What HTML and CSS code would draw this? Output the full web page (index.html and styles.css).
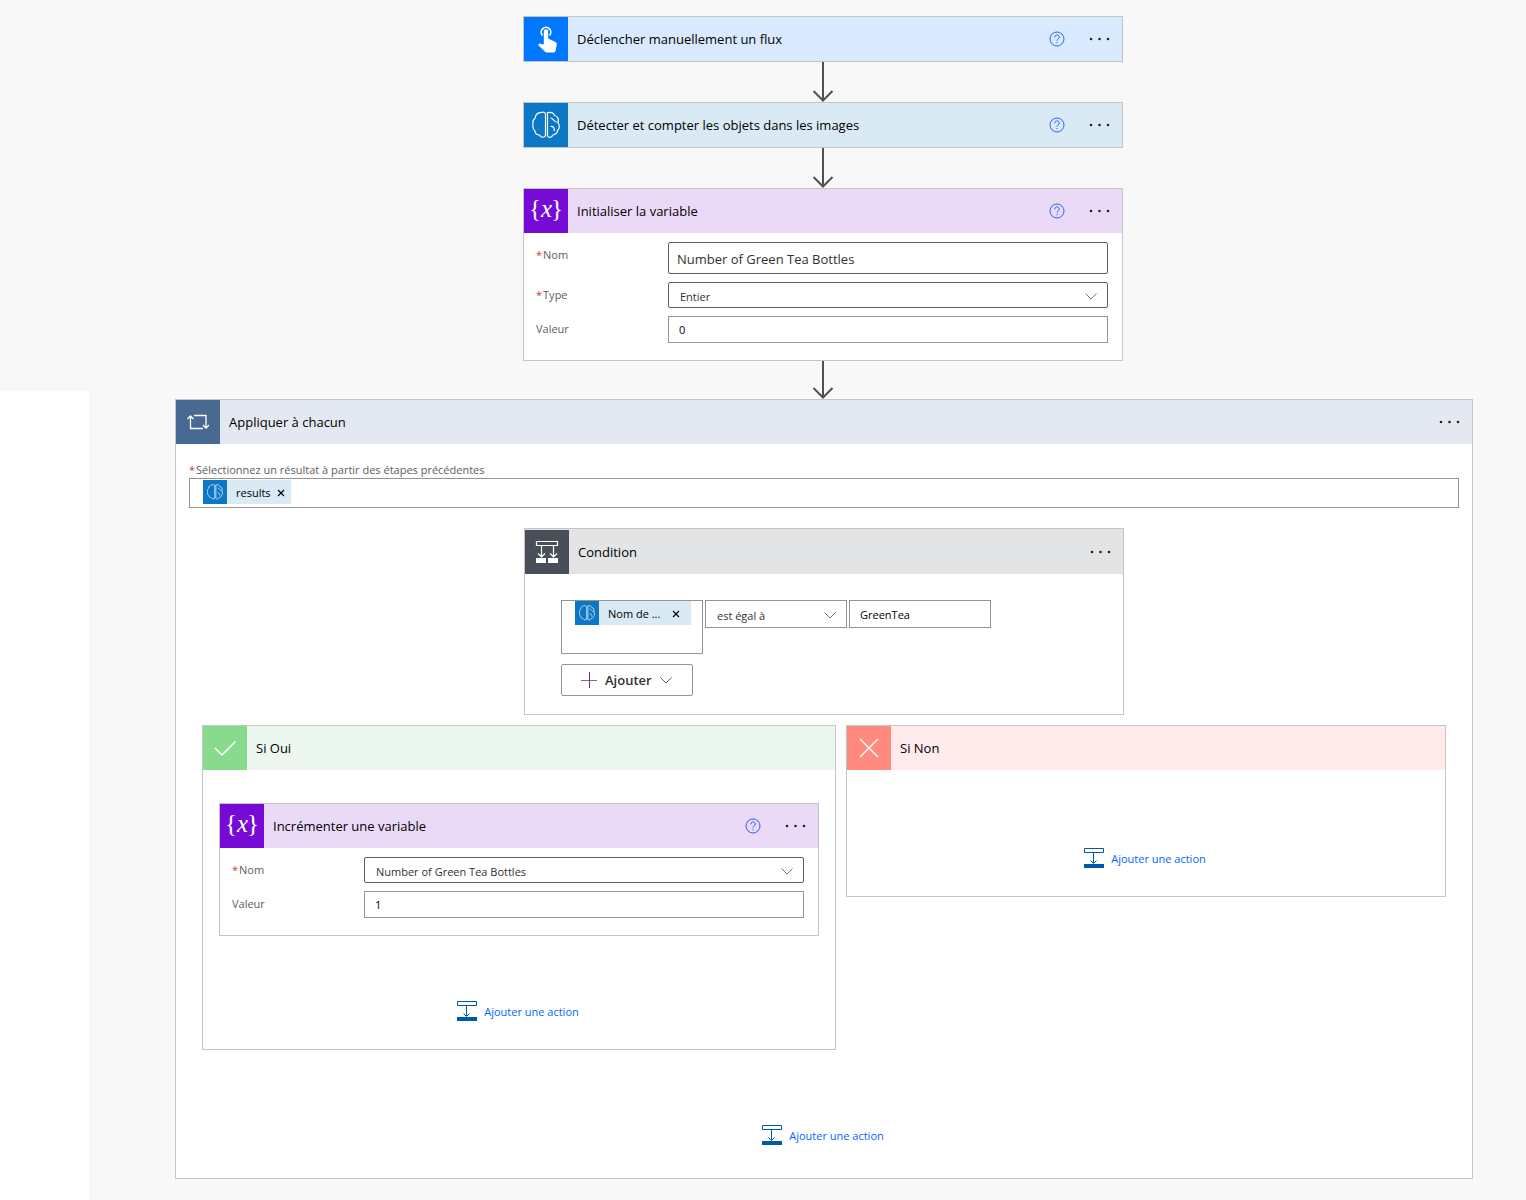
FILE: index.html
```html
<!DOCTYPE html>
<html lang="fr">
<head>
<meta charset="utf-8">
<meta name="viewport" content="width=device-width, initial-scale=1">
<title>Flux</title>
<link rel="stylesheet" href="styles.css">
</head>
<body>
<svg class="sprite" aria-hidden="true">
  <symbol id="brain" viewBox="0 0 28 28">
    <path d="M13.500 25V3C13.500.8 10 1 8 1.700C5 2 3.500 4 3.200 7C1 8.500.7 11 1 13C.5 16 1 18.500 3 20C3.200 22.500 5 24 7.500 24C9 27 13 27 13.500 24M15.500 24.500V1.500C18 1 22 1.500 22.500 4.500C26 5.500 27 8 26 11.500C28 14 27.500 18 25.500 19.500C25.500 22 23 23.500 21 24C19.500 27 16 27 15.500 24.500M18.500 7C21 6.500 22 11.500 26 11.500M18.500 15.500C21.500 15 23 17.500 22 20"/>
  </symbol>
  <symbol id="help" viewBox="0 0 16 16">
    <circle cx="8" cy="8" r="7"/>
    <path d="M5.800 6.200C5.800 3.200 10.300 3.200 10.300 6C10.300 7.800 8 7.900 8 9.700M8 11v1.200"/>
  </symbol>
  <symbol id="more" viewBox="0 0 22 4">
    <circle cx="2" cy="2" r="1.300"/><circle cx="10.500" cy="2" r="1.300"/><circle cx="19" cy="2" r="1.300"/>
  </symbol>
  <symbol id="chevron" viewBox="0 0 12 7">
    <path d="M.500.500L6 6L11.500.500"/>
  </symbol>
  <symbol id="cross" viewBox="0 0 8 8">
    <path d="M1 1l6 6M7 1L1 7"/>
  </symbol>
  <symbol id="arrow" viewBox="0 0 22 12">
    <path d="M1.500 1L11 10.500L20.500 1"/>
  </symbol>
  <symbol id="insert" viewBox="0 0 20 20">
    <path d="M.500.500h19v4H.500zM9.500 5v10M6.500 12.500l3 3l3-3" fill="none" stroke="#0058ad"/>
    <path d="M0 16h20v4H0z" fill="#0058ad"/>
  </symbol>
</svg>

<div class="page">
  <aside class="side" aria-label="Panneau"></aside>
  <main class="canvas">
    <div class="steps">
      <section class="card card--manual">
        <header class="card__head">
          <span class="card__icon"><svg width="44" height="44" viewBox="0 0 44 44"><path d="M18.500 18.500A4.800 4.800 0 1 1 25.500 18.500" fill="none" stroke="#fff" stroke-width="1.700"/><path d="M19.800 14.500a2.200 2.200 0 0 1 4.400 0V21.500L31.500 25Q33 25.800 32.800 27.500L31.500 34Q31.200 35.500 29.700 35.500H23Q21.800 35.500 20.800 34.500L14 28L15 27Q15.800 26.300 17 26.700L19.800 27.500z" fill="#fff"/></svg></span>
          <h2>Déclencher manuellement un flux</h2>
          <button class="icon-button help" aria-label="Aide"><svg width="16" height="16"><use href="#help"/></svg></button>
          <button class="icon-button" aria-label="Plus"><svg width="22" height="4"><use href="#more"/></svg></button>
        </header>
      </section>
      <div class="link-arrow"><svg width="22" height="12"><use href="#arrow"/></svg></div>
      <section class="card card--ai">
        <header class="card__head">
          <span class="card__icon"><svg class="brain" width="28" height="28"><use href="#brain"/></svg></span>
          <h2>Détecter et compter les objets dans les images</h2>
          <button class="icon-button help" aria-label="Aide"><svg width="16" height="16"><use href="#help"/></svg></button>
          <button class="icon-button" aria-label="Plus"><svg width="22" height="4"><use href="#more"/></svg></button>
        </header>
      </section>
      <div class="link-arrow"><svg width="22" height="12"><use href="#arrow"/></svg></div>
      <section class="card card--variable">
        <header class="card__head">
          <span class="card__icon"><svg class="variable" width="44" height="44" viewBox="0 0 44 44"><text x="5" y="28">{</text><text x="17" y="28" font-style="italic">x</text><text x="27" y="28">}</text></svg></span>
          <h2>Initialiser la variable</h2>
          <button class="icon-button help" aria-label="Aide"><svg width="16" height="16"><use href="#help"/></svg></button>
          <button class="icon-button" aria-label="Plus"><svg width="22" height="4"><use href="#more"/></svg></button>
        </header>
        <div class="form">
          <label for="init-name"><span class="required">*</span>Nom</label>
          <input class="field field--large" id="init-name" type="text" value="Number of Green Tea Bottles">
          <label for="init-type"><span class="required">*</span>Type</label>
          <div class="select select--dark"><select id="init-type"><option>Entier</option></select><svg width="12" height="7"><use href="#chevron"/></svg></div>
          <label for="init-value">Valeur</label>
          <input class="field" id="init-value" type="text" value="0">
        </div>
      </section>
      <div class="link-arrow link-arrow--short"><svg width="22" height="12"><use href="#arrow"/></svg></div>
    </div>

    <section class="card card--wide card--loop">
      <header class="card__head">
        <span class="card__icon"><svg width="22" height="16" viewBox="0 0 22 16"><path d="M3.500 2v12.500H16M.500 5L3.500 2L6.500 5M7 1.500h12v12M16 11l3 3l3-3" fill="none" stroke="#fff" stroke-width="1.300"/></svg></span>
        <h2>Appliquer à chacun</h2>
        <button class="icon-button" aria-label="Plus"><svg width="22" height="4"><use href="#more"/></svg></button>
      </header>
      <div class="loop">
        <div class="loop__source">
          <label for="source"><span class="required">*</span>Sélectionnez un résultat à partir des étapes précédentes</label>
          <div class="tokens">
            <span class="token"><span class="token__icon"><svg class="brain" width="16" height="16"><use href="#brain"/></svg></span><span class="token__text">results</span><button aria-label="Supprimer"><svg width="8" height="8"><use href="#cross"/></svg></button></span>
            <input id="source" type="text">
          </div>
        </div>

        <section class="card card--condition">
          <header class="card__head">
            <span class="card__icon"><svg width="24" height="24" viewBox="0 0 24 24"><path d="M1.500 1.500h21v4h-21zM6.500 6v11M3 13.500l3.500 3.500L10 13.500M18.500 6v11M15 13.500l3.500 3.500l3.500-3.500" fill="none" stroke="#fff" stroke-width="1.200"/><path d="M1 18h10v5H1zM13 18h10v5H13z" fill="#fff"/></svg></span>
            <h2>Condition</h2>
            <button class="icon-button" aria-label="Plus"><svg width="22" height="4"><use href="#more"/></svg></button>
          </header>
          <div class="condition">
            <div class="condition__row">
              <div class="tokens tokens--tall">
                <span class="token token--fixed"><span class="token__icon"><svg class="brain" width="16" height="16"><use href="#brain"/></svg></span><span class="token__text">Nom de ...</span><button aria-label="Supprimer"><svg width="8" height="8"><use href="#cross"/></svg></button></span>
              </div>
              <div class="select"><select aria-label="Opérateur"><option>est égal à</option></select><svg width="12" height="7"><use href="#chevron"/></svg></div>
              <input class="field" type="text" aria-label="Valeur comparée" value="GreenTea">
            </div>
            <button class="add-button"><svg width="16" height="16" viewBox="0 0 16 16"><path d="M0 8.500h16" stroke="#797775"/><path d="M8.500 0v16" stroke="#7d2a80"/></svg>Ajouter<svg class="chevron" width="12" height="7"><use href="#chevron"/></svg></button>
          </div>
        </section>

        <div class="branches">
          <section class="card card--wide card--yes">
            <header class="card__head">
              <span class="card__icon"><svg width="24" height="18" viewBox="0 0 24 18"><path d="M2 9l7 7L22.500 2.500" fill="none" stroke="#fff" stroke-width="1.500"/></svg></span>
              <h2>Si Oui</h2>
            </header>
            <div class="branch branch--filled">
              <section class="card card--variable">
                <header class="card__head">
                  <span class="card__icon"><svg class="variable" width="44" height="44" viewBox="0 0 44 44"><text x="5" y="28">{</text><text x="17" y="28" font-style="italic">x</text><text x="27" y="28">}</text></svg></span>
                  <h2>Incrémenter une variable</h2>
                  <button class="icon-button help" aria-label="Aide"><svg width="16" height="16"><use href="#help"/></svg></button>
                  <button class="icon-button" aria-label="Plus"><svg width="22" height="4"><use href="#more"/></svg></button>
                </header>
                <div class="form">
                  <label for="inc-name"><span class="required">*</span>Nom</label>
                  <div class="select select--dark"><select id="inc-name"><option>Number of Green Tea Bottles</option></select><svg width="12" height="7"><use href="#chevron"/></svg></div>
                  <label for="inc-value">Valeur</label>
                  <input class="field" id="inc-value" type="text" value="1">
                </div>
              </section>
              <a class="add-action" href="#"><svg width="20" height="20"><use href="#insert"/></svg>Ajouter une action</a>
            </div>
          </section>
          <section class="card card--wide card--no">
            <header class="card__head">
              <span class="card__icon"><svg width="20" height="20" viewBox="0 0 20 20"><path d="M1 1l18 18M19 1L1 19" stroke="#fff" stroke-width="1.400"/></svg></span>
              <h2>Si Non</h2>
            </header>
            <div class="branch branch--empty">
              <a class="add-action" href="#"><svg width="20" height="20"><use href="#insert"/></svg>Ajouter une action</a>
            </div>
          </section>
        </div>

        <a class="add-action add-action--loop" href="#"><svg width="20" height="20"><use href="#insert"/></svg>Ajouter une action</a>
      </div>
    </section>
  </main>
</div>
</body>
</html>
```
FILE: styles.css
```css
* {
  box-sizing: border-box;
}

body {
  margin: 0;
  background: #f8f8f8;
  color: #000;
  font-family: "Open Sans", "Noto Sans", sans-serif;
  font-size: 12px;
}

button,
input,
select {
  margin: 0;
  font: inherit;
  color: inherit;
}

button {
  padding: 0;
  border: 0;
  background: none;
  cursor: pointer;
}

svg {
  display: block;
  flex: none;
}

.sprite {
  position: absolute;
  width: 0;
  height: 0;
}

.page {
  display: flex;
  min-height: 100vh;
}

.side {
  flex: none;
  width: 89px;
  margin-top: 391px;
  background: #fff;
}

.canvas {
  flex: 1;
  min-width: 0;
  padding: 16px 53px 20px 86px;
}

.steps {
  display: flex;
  flex-direction: column;
  align-items: center;
  padding-right: 2px;
}

/* Connector between two steps */
.link-arrow {
  display: flex;
  flex-direction: column;
  align-items: center;
  height: 40px;
}

.link-arrow--short {
  height: 38px;
}

.link-arrow::before {
  content: "";
  flex: 1;
  width: 2px;
  margin-bottom: -10px;
  background: #505050;
}

.link-arrow svg {
  fill: none;
  stroke: #505050;
  stroke-width: 2;
}

/* Cards */
.card {
  width: 100%;
  max-width: 600px;
  border: 1px solid #c6c5c4;
  background: #fff;
}

.card--wide {
  max-width: none;
}

.card__head {
  display: flex;
  align-items: center;
  padding-right: 11px;
  background: var(--tint);
}

.card__icon {
  display: flex;
  flex: none;
  align-items: center;
  justify-content: center;
  width: 44px;
  height: 44px;
  background: var(--accent);
}

.card h2 {
  flex: 1;
  margin: 0 0 0 9px;
  font-size: 13px;
  font-weight: 400;
  line-height: 20px;
}

.card--manual { --accent: #0077ff; --tint: #d9eaff; }
.card--ai { --accent: #0b77c5; --tint: #daeaf5; }
.card--variable { --accent: #770bd6; --tint: #ebdaf7; }
.card--loop { --accent: #486991; --tint: #e4e8f0; }
.card--condition { --accent: #484f58; --tint: #e3e4e5; }
.card--yes { --accent: #88da8d; --tint: #ecf7ef; }
.card--no { --accent: #ff8a80; --tint: #ffebeb; }

.card--condition > .card__head {
  padding-top: 1px;
}

.brain {
  fill: none;
  stroke: #fff;
  stroke-width: 1.2;
}

.variable {
  fill: #fff;
  font-family: "Liberation Serif", serif;
  font-size: 25px;
}

.icon-button {
  display: flex;
  align-items: center;
  height: 20px;
  fill: #252423;
}

.help {
  margin-right: 24px;
}

.help svg {
  fill: none;
  stroke: #2b63f3;
}

/* Forms */
.form {
  display: grid;
  grid-template-columns: 132px 1fr;
  align-items: start;
  row-gap: 8px;
  padding: 9px 14px 17px 12px;
}

label {
  color: #605e5c;
  font-size: 11px;
}

.form label {
  line-height: 26px;
}

.required {
  margin-right: 1px;
  color: #d13438;
}

.field {
  width: 100%;
  min-width: 0;
  height: 27px;
  padding: 0 10px;
  border: 1px solid #949494;
  border-radius: 0;
  background: #fff;
  font-size: 11px;
}

.field--large {
  height: 32px;
  padding: 2px 8px 0;
  border-color: #605e5c;
  border-radius: 2px;
  color: #323130;
  font-size: 13px;
}

.select {
  display: grid;
  align-items: center;
  min-width: 0;
  height: 28px;
  border: 1px solid #949494;
  background: #fff;
}

.select--dark {
  height: 26px;
  border-color: #605e5c;
  border-radius: 2px;
}

.select select {
  grid-area: 1 / 1;
  width: 100%;
  height: 24px;
  padding: 2px 28px 0 11px;
  border: 0;
  appearance: none;
  background: none;
  color: #323130;
  font-size: 11px;
}

.select svg {
  grid-area: 1 / 1;
  justify-self: end;
  margin: 2px 10px 0 0;
  fill: none;
  stroke: #797775;
  pointer-events: none;
}

/* Dynamic content tokens */
.tokens {
  display: flex;
  align-items: flex-start;
  min-width: 0;
  height: 30px;
  padding: 1px 13px;
  border: 1px solid #949494;
  background: #fff;
}

.tokens--tall {
  height: 54px;
  padding: 0 11px 0 13px;
}

.tokens input {
  flex: 1;
  min-width: 0;
  height: 24px;
  border: 0;
  outline: 0;
  background: none;
}

.token {
  display: flex;
  align-items: center;
  height: 24px;
  padding-right: 6px;
  background: #daeaf5;
  font-size: 11px;
}

.token--fixed {
  width: 116px;
  padding-right: 11px;
}

.token__icon {
  display: flex;
  align-items: center;
  justify-content: center;
  width: 24px;
  height: 24px;
  margin-right: 9px;
  background: #0b77c5;
}

.token__text {
  flex: 1;
  margin-right: 6px;
  white-space: nowrap;
}

.token button svg {
  margin-top: 2px;
  stroke: #000;
  stroke-width: 1.2;
}

/* Loop and condition */
.loop {
  display: flex;
  flex-direction: column;
  align-items: center;
  padding: 18px 13px 33px;
}

.loop__source {
  width: 100%;
  margin-bottom: 20px;
}

.loop__source label {
  display: block;
  line-height: 16px;
}

.condition {
  padding: 26px 36px 18px;
}

.condition__row {
  display: grid;
  grid-template-columns: repeat(3, minmax(0, 142px));
  align-items: start;
  gap: 2px;
  margin-bottom: 10px;
}

.condition__row .field {
  height: 28px;
}

.add-button {
  display: flex;
  align-items: center;
  gap: 8px;
  height: 32px;
  padding: 0 20px 0 19px;
  border: 1px solid #949494;
  border-radius: 2px;
  background: #fff;
  color: #323130;
  font-size: 13px;
  font-weight: 600;
}

.chevron {
  fill: none;
  stroke: #605e5c;
}

.branches {
  display: grid;
  grid-template-columns: 1fr 600px;
  align-items: start;
  gap: 10px;
  align-self: stretch;
  margin: 10px 13px 0;
}

.branch {
  display: flex;
  flex-direction: column;
  align-items: center;
  padding: 33px 16px 28px;
}

.branch--filled {
  gap: 65px;
}

.branch--empty {
  padding-top: 78px;
}

.add-action {
  display: flex;
  align-items: center;
  gap: 7px;
  height: 20px;
  padding-right: 2px;
  color: #0065ff;
  font-size: 11px;
  text-decoration: none;
}

.add-action--loop {
  margin-top: 75px;
}

@media (max-width: 1400px) {
  .branches {
    grid-template-columns: 1fr;
  }
}
```
